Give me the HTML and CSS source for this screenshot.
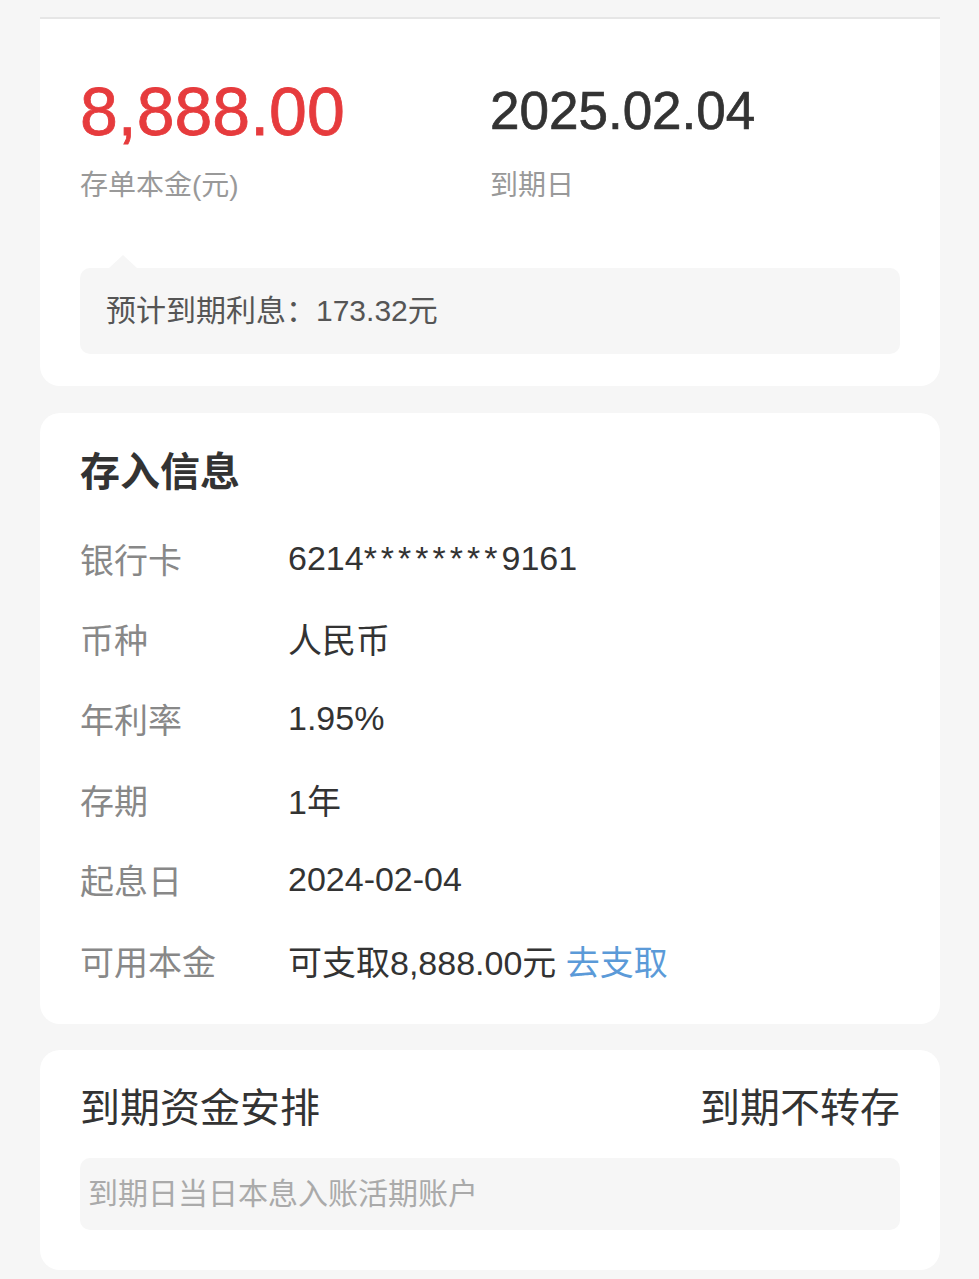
FILE: index.html
```html
<!DOCTYPE html>
<html lang="zh-CN">
<head>
  <meta charset="UTF-8">
  <title>定期存单详情</title>
  <link rel="stylesheet" href="styles.css">
</head>
<body>
  <div class="page">
    <section class="card summary">
      <div class="rule"></div>
      <div class="figures">
        <div class="figure">
          <div class="amount">8,888.00</div>
          <div class="caption">存单本金(元)</div>
        </div>
        <div class="figure">
          <div class="date">2025.02.04</div>
          <div class="caption">到期日</div>
        </div>
      </div>
      <div class="interest">预计到期利息：173.32元</div>
    </section>

    <section class="card">
      <h2 class="title">存入信息</h2>
      <div class="rows">
        <div class="row"><span class="label">银行卡</span><span class="value">6214<span class="mask">********</span>9161</span></div>
        <div class="row"><span class="label">币种</span><span class="value">人民币</span></div>
        <div class="row"><span class="label">年利率</span><span class="value">1.95%</span></div>
        <div class="row"><span class="label">存期</span><span class="value">1年</span></div>
        <div class="row"><span class="label">起息日</span><span class="value">2024-02-04</span></div>
        <div class="row"><span class="label">可用本金</span><span class="value">可支取8,888.00元 <a class="link" href="#">去支取</a></span></div>
      </div>
    </section>

    <section class="card maturity">
      <div class="head">
        <span>到期资金安排</span>
        <span>到期不转存</span>
      </div>
      <div class="note">到期日当日本息入账活期账户</div>
    </section>
  </div>
</body>
</html>
```

FILE: styles.css
```css
body {margin: 0; background: #f6f6f6; font-family: "Liberation Sans", "Noto Sans CJK SC", sans-serif; color: #333;}
.page {padding: 0 39px 20px 40px;}
.card {background: #fff; border-radius: 20px; padding: 34px 40px 24px; margin-top: 27px;}

.summary {margin-top: 0; padding: 0 40px 32px; border-radius: 0 0 20px 20px;}
.rule {height: 2px; margin: 17px -40px 0; background: #e6e6e6;}
.figures {display: flex; margin-top: 59px;}
.figure:first-child {width: 410px;}
.amount {font-size: 68px; line-height: 66px; color: #e63b3d; -webkit-text-stroke: 0.8px #e63b3d;}
.date {font-size: 53px; line-height: 66px; color: #333; -webkit-text-stroke: 0.7px #333;}
.caption {margin-top: 22px; font-size: 28px; line-height: 40px; color: #999;}
.interest {position: relative; margin-top: 62px; height: 86px; line-height: 86px; padding-left: 26px; background: #f6f6f6; border-radius: 10px; font-size: 30px; color: #555;}
.interest::before {content: ""; position: absolute; left: 29px; top: -13px; border-left: 14px solid transparent; border-right: 14px solid transparent; border-bottom: 13px solid #f6f6f6;}

.title {margin: 0; font-size: 40px; line-height: 50px; font-weight: bold; color: #333;}
.rows {margin-top: 21px;}
.row {display: flex; align-items: center; height: 80.4px; font-size: 34px;}
.label {width: 208px; color: #888;}
.value {color: #333;}
.mask {letter-spacing: 4px;}
.link {color: #5b9ad8; text-decoration: none;}

.maturity {margin-top: 26px; padding: 33px 40px 40px;}
.head {display: flex; justify-content: space-between; font-size: 40px; line-height: 50px; color: #333;}
.note {margin-top: 25px; height: 72px; line-height: 72px; padding-left: 8px; background: #f6f6f6; border-radius: 10px; font-size: 30px; color: #aaa;}
```
